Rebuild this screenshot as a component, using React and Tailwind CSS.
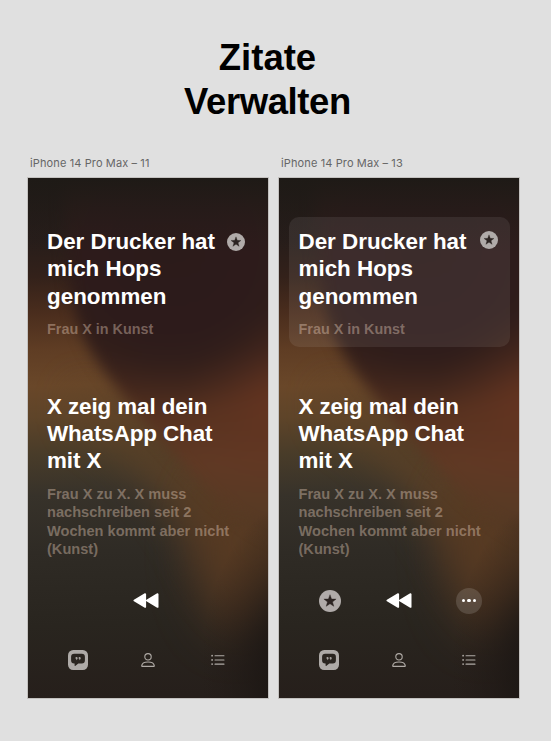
import { useId } from "react";

function Wallpaper() {
  const id = useId().replace(/[^a-zA-Z0-9]/g, "");
  return (
    <svg className="absolute inset-0 h-full w-full" viewBox="0 0 240 520" preserveAspectRatio="none" aria-hidden="true">
      <defs>
        <linearGradient id={`${id}l`} gradientUnits="userSpaceOnUse" x1="0" y1="0" x2="12" y2="520">
          <stop offset="0" stopColor="#1e1a16" />
          <stop offset="0.12" stopColor="#271d1a" />
          <stop offset="0.19" stopColor="#33211a" />
          <stop offset="0.26" stopColor="#4a2d1d" />
          <stop offset="0.33" stopColor="#5f3d24" />
          <stop offset="0.4" stopColor="#694729" />
          <stop offset="0.46" stopColor="#5e4429" />
          <stop offset="0.53" stopColor="#493c29" />
          <stop offset="0.61" stopColor="#37322a" />
          <stop offset="0.72" stopColor="#2f2b25" />
          <stop offset="0.86" stopColor="#29251f" />
          <stop offset="1" stopColor="#261f1b" />
        </linearGradient>
        <linearGradient id={`${id}r`} gradientUnits="userSpaceOnUse" x1="118" y1="0" x2="142" y2="520">
          <stop offset="0" stopColor="#1e1a16" />
          <stop offset="0.12" stopColor="#261c1a" />
          <stop offset="0.25" stopColor="#2d1c1b" />
          <stop offset="0.34" stopColor="#38211b" />
          <stop offset="0.45" stopColor="#55311f" />
          <stop offset="0.55" stopColor="#603924" />
          <stop offset="0.65" stopColor="#583a24" />
          <stop offset="0.75" stopColor="#463120" />
          <stop offset="0.85" stopColor="#32281f" />
          <stop offset="1" stopColor="#261e19" />
        </linearGradient>
        <radialGradient id={`${id}d`}>
          <stop offset="0" stopColor="#2b1b1a" />
          <stop offset="0.5" stopColor="#2d1b1b" />
          <stop offset="0.68" stopColor="#2f1d1a" stopOpacity="0.8" />
          <stop offset="0.84" stopColor="#37211b" stopOpacity="0.4" />
          <stop offset="1" stopColor="#44271d" stopOpacity="0" />
        </radialGradient>
        <radialGradient id={`${id}e`}>
          <stop offset="0" stopColor="#6a3520" stopOpacity="0.75" />
          <stop offset="0.5" stopColor="#653421" stopOpacity="0.4" />
          <stop offset="1" stopColor="#653421" stopOpacity="0" />
        </radialGradient>
        <linearGradient id={`${id}t`} x1="0" y1="0" x2="0" y2="1">
          <stop offset="0" stopColor="#1e1a16" />
          <stop offset="1" stopColor="#261c1a" stopOpacity="0" />
        </linearGradient>
        <radialGradient id={`${id}c`}>
          <stop offset="0" stopColor="#1a1513" />
          <stop offset="0.4" stopColor="#1d1714" stopOpacity="0.75" />
          <stop offset="1" stopColor="#241b17" stopOpacity="0" />
        </radialGradient>
        <filter id={`${id}b`} x="-50%" y="-50%" width="200%" height="200%" colorInterpolationFilters="sRGB">
          <feGaussianBlur stdDeviation="7" />
        </filter>
        <filter id={`${id}w`} x="-60%" y="-60%" width="220%" height="220%" colorInterpolationFilters="sRGB">
          <feGaussianBlur stdDeviation="20" />
        </filter>
        <clipPath id={`${id}k`}>
          <path d="M35 -60 C36 90 42 135 62 172 C92 220 138 268 174 306 C205 340 240 360 330 400 L330 -60 Z" />
        </clipPath>
      </defs>
      <rect width="240" height="520" fill={`url(#${id}l)`} />
      <path d="M50 205 C105 250 160 290 290 320 L290 400 L215 440 L180 400 C155 340 110 275 50 245 Z" fill="#604226" opacity="0.85" filter={`url(#${id}w)`} />
      <ellipse cx="208" cy="375" rx="48" ry="90" fill="#553620" opacity="0.5" filter={`url(#${id}w)`} />
      <g filter={`url(#${id}b)`}>
        <g clipPath={`url(#${id}k)`}>
          <rect x="20" y="-60" width="310" height="540" fill={`url(#${id}r)`} />
          <ellipse cx="250" cy="225" rx="95" ry="95" fill={`url(#${id}e)`} />
          <ellipse cx="142" cy="72" rx="165" ry="165" fill={`url(#${id}d)`} />
        </g>
      </g>
      <rect width="240" height="75" fill={`url(#${id}t)`} />
      <ellipse cx="268" cy="495" rx="95" ry="170" fill={`url(#${id}c)`} />
    </svg>
  );
}

function StarBadge({ className }) {
  return (
    <svg className={className} viewBox="0 0 22 22" aria-hidden="true">
      <circle cx="11" cy="11" r="11" fill="#b0aba9" />
      <path d="M11 4.7 L12.55 9 L17.1 9.1 L13.5 11.9 L14.8 16.3 L11 13.75 L7.2 16.3 L8.5 11.9 L4.9 9.1 L9.45 9 Z" fill="#2c2422" stroke="#2c2422" strokeWidth="0.4" strokeLinejoin="round" />
    </svg>
  );
}

function Rewind() {
  return (
    <svg className="h-[15px] w-[26px]" viewBox="0 0 26 15" fill="#fff" stroke="#fff" strokeWidth="1.8" strokeLinejoin="round" aria-hidden="true">
      <path d="M1.4 7.5 L12.2 1.1 L12.2 13.9 Z" />
      <path d="M13.9 7.5 L24.6 1.1 L24.6 13.9 Z" />
    </svg>
  );
}

function QuoteIcon() {
  return (
    <svg className="h-5 w-5" viewBox="0 0 20 20" aria-hidden="true">
      <rect width="20" height="20" rx="5.2" fill="#aeaaa7" />
      <path d="M6.2 3.7 H13.8 Q16.9 3.7 16.9 6.7 V10.6 Q16.9 13.6 13.8 13.6 H10.3 L7.2 16 Q6.6 16.3 6.6 15.6 V13.6 H6.2 Q3.1 13.6 3.1 10.6 V6.7 Q3.1 3.7 6.2 3.7 Z" fill="#2a2520" />
      <g fill="#aeaaa7">
        <circle cx="8.5" cy="8" r="1.05" />
        <circle cx="11.6" cy="8" r="1.05" />
        <path d="M9.55 8 Q9.5 9.7 8 10.2 L8.6 8.6 Z M12.65 8 Q12.6 9.7 11.1 10.2 L11.7 8.6 Z" />
      </g>
    </svg>
  );
}

function PersonIcon() {
  return (
    <svg className="mr-[3px] h-[14px] w-[14px]" viewBox="0 0 14 14" fill="none" stroke="#b0aba6" strokeWidth="1.1" aria-hidden="true">
      <ellipse cx="7" cy="3.8" rx="3.2" ry="3.2" />
      <path d="M1.2 13.4 Q0.7 13.4 0.7 12.9 C0.9 10.4 3.8 9 7 9 C10.2 9 13.1 10.4 13.3 12.9 Q13.3 13.4 12.8 13.4 Z" />
    </svg>
  );
}

function ListIcon() {
  return (
    <svg className="h-3 w-[14px]" viewBox="0 0 14 12" aria-hidden="true">
      <g fill="#b0aba6">
        <circle cx="1.1" cy="1.7" r="0.9" />
        <circle cx="1.1" cy="5.9" r="0.9" />
        <circle cx="1.1" cy="10.1" r="0.9" />
        <rect x="3.5" y="1.2" width="10" height="1.1" rx="0.5" />
        <rect x="3.5" y="5.4" width="10" height="1.1" rx="0.5" />
        <rect x="3.5" y="9.6" width="10" height="1.1" rx="0.5" />
      </g>
    </svg>
  );
}

function Quote({ lines, note, headingClass, noteClass }) {
  return (
    <div className="whitespace-nowrap">
      <h2 className={headingClass}>
        {lines.map((line) => (
          <span key={line} className="block">{line}</span>
        ))}
      </h2>
      <p className={noteClass}>
        {note.map((line) => (
          <span key={line} className="block">{line}</span>
        ))}
      </p>
    </div>
  );
}

function Phone({ name, selected }) {
  return (
    <section className="w-[240px]">
      <p className="h-[22px] pl-[2px] font-['Inter',sans-serif] text-[11px] leading-[14px] tracking-[0.12px] whitespace-nowrap text-[#666]">{name}</p>
      <div className="relative h-[520px] overflow-hidden shadow-[0_0_0_1px_#c3c1bf]">
        <Wallpaper />
        <div className="relative flex h-full flex-col">
          <div
            className={
              selected
                ? "mr-[9.5px] ml-[9.5px] mt-[39px] flex h-[130px] justify-between rounded-[10px] bg-white/8 pt-[11px] pl-[10px] pr-3"
                : "mx-[10px] mt-[39px] flex h-[130px] justify-between pt-[11px] pl-[9px] pr-[13px]"
            }
          >
            <Quote
              headingClass="text-[22.4px] leading-[27.3px] font-bold text-white"
              noteClass="mt-[10px] text-[14.4px] leading-[18.5px] font-bold text-[#f1d8c4]/38"
              lines={["Der Drucker hat", "mich Hops", "genommen"]}
              note={["Frau X in Kunst"]}
            />
            <StarBadge className={selected ? "mt-[3px] h-[18px] w-[18px] shrink-0" : "mt-[5px] h-[18px] w-[18px] shrink-0"} />
          </div>
          <div className={selected ? "mt-[46px] h-[168px] pl-[19.5px]" : "mt-[46px] h-[168px] pl-[19px]"}>
            <Quote
              headingClass="text-[22.4px] leading-[27px] font-bold tracking-[-0.1px] text-white"
              noteClass="mt-[11px] text-[14.6px] leading-[18.4px] font-bold text-[#f1d8c4]/38"
              lines={["X zeig mal dein", "WhatsApp Chat", "mit X"]}
              note={["Frau X zu X. X muss", "nachschreiben seit 2", "Wochen kommt aber nicht", "(Kunst)"]}
            />
          </div>
          <div className={selected ? "mt-[26px] flex h-[27px] items-center justify-between pl-10 pr-[37px]" : "mt-[26px] flex h-[27px] items-center justify-center pr-[5px]"}>
            {selected && <StarBadge className="h-[22px] w-[22px]" />}
            <Rewind />
            {selected && (
              <span className="flex h-[26px] w-[26px] items-center justify-center gap-[2px] rounded-full bg-white/14">
                <i className="h-[3.5px] w-[3.5px] rounded-full bg-white" />
                <i className="h-[3.5px] w-[3.5px] rounded-full bg-white" />
                <i className="h-[3.5px] w-[3.5px] rounded-full bg-white" />
              </span>
            )}
          </div>
          <nav className="mt-[36px] flex h-5 items-center justify-between pl-10 pr-[43px]">
            <QuoteIcon />
            <PersonIcon />
            <ListIcon />
          </nav>
        </div>
      </div>
    </section>
  );
}

export default function App() {
  return (
    <main className="h-[741px] w-[551px] overflow-hidden bg-[#e0e0e0] font-['Liberation_Sans',Arial,sans-serif]">
      <h1 className="w-[535px] pt-9 text-center text-[36.5px] leading-[44px] font-bold tracking-[-0.4px] text-black">
        <span className="block tracking-normal">Zitate</span>
        <span className="block">Verwalten</span>
      </h1>
      <div className="mt-8 flex gap-[11px] pl-7">
        <Phone name="iPhone 14 Pro Max – 11" />
        <Phone name="iPhone 14 Pro Max – 13" selected />
      </div>
    </main>
  );
}
